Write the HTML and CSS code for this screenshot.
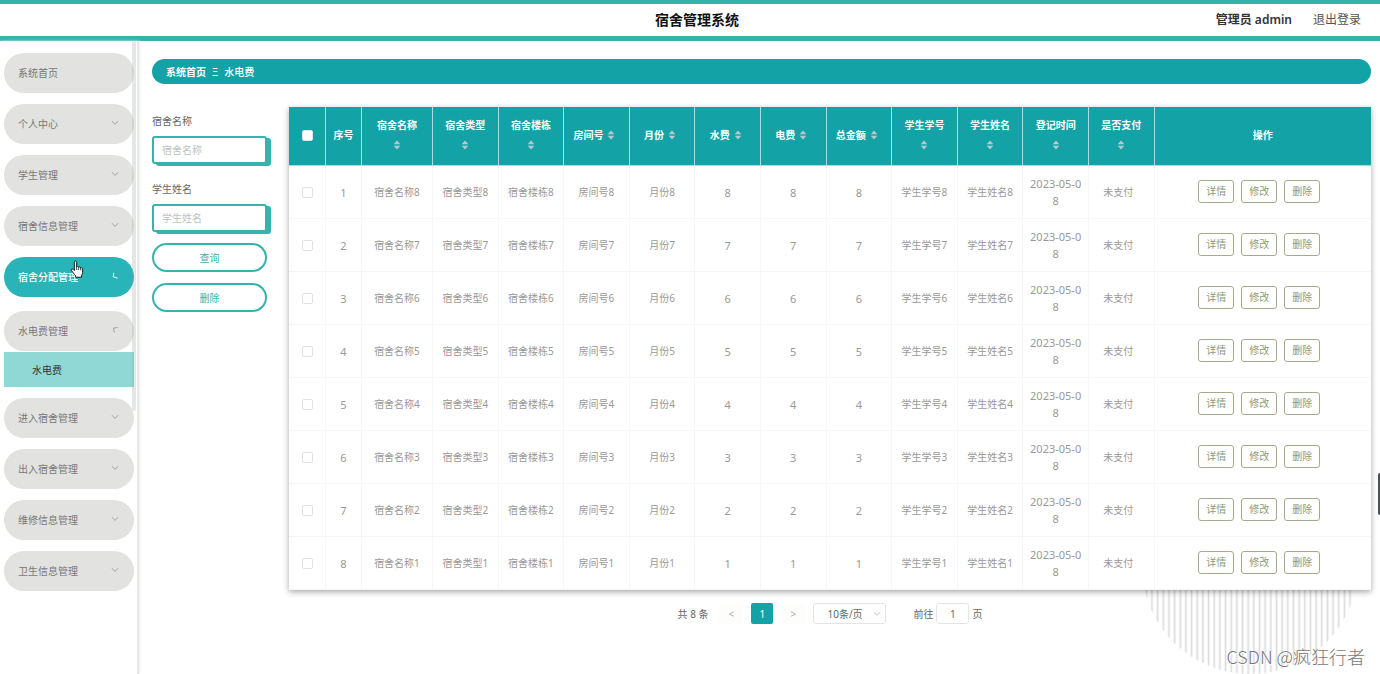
FILE: index.html
```html
<!DOCTYPE html>
<html lang="zh-CN">
<head>
<meta charset="utf-8">
<title>宿舍管理系统</title>
<link rel="stylesheet" href="styles.css">
</head>
<body>
<svg class="defs" aria-hidden="true">
  <symbol id="chevron" viewBox="0 0 8 8"><path d="M1 2.2 4 5.4 7 2.2" fill="none" stroke="currentColor" stroke-width="0.9"/></symbol>
  <symbol id="sort" viewBox="0 0 8 10"><path d="M4 .5 7.3 4.2H.7zM4 9.5.7 5.8h6.6z" fill="currentColor"/></symbol>
</svg>
<header class="topbar">
  <h1 class="topbar-title">宿舍管理系统</h1>
  <div class="topbar-user"><strong>管理员 admin</strong><a href="#logout">退出登录</a></div>
</header>
<div class="layout">
  <nav class="sidebar">
    <a class="menu-item" href="#home">系统首页</a>
    <a class="menu-item" href="#me">个人中心<svg class="chevron"><use href="#chevron"/></svg></a>
    <a class="menu-item" href="#students">学生管理<svg class="chevron"><use href="#chevron"/></svg></a>
    <a class="menu-item" href="#dorms">宿舍信息管理<svg class="chevron"><use href="#chevron"/></svg></a>
    <a class="menu-item active" href="#assign">宿舍分配管理<svg class="chevron" viewBox="0 0 8 8"><path d="M2.8.8 2.2 4.8 6.6 6.2" fill="none" stroke="currentColor"/></svg></a>
    <a class="menu-item open" href="#bills">水电费管理<svg class="chevron" viewBox="0 0 8 8"><path d="M6.6 1.4 2.4 2.2 3.4 6.6" fill="none" stroke="currentColor" stroke-width=".9"/></svg></a>
    <a class="submenu-item" href="#bill">水电费</a>
    <a class="menu-item" href="#enter">进入宿舍管理<svg class="chevron"><use href="#chevron"/></svg></a>
    <a class="menu-item" href="#access">出入宿舍管理<svg class="chevron"><use href="#chevron"/></svg></a>
    <a class="menu-item" href="#repair">维修信息管理<svg class="chevron"><use href="#chevron"/></svg></a>
    <a class="menu-item" href="#hygiene">卫生信息管理<svg class="chevron"><use href="#chevron"/></svg></a>
    <span class="scroll-thumb"></span>
    <svg class="cursor" viewBox="0 0 14 19"><path d="M4.2 11.2V2.3C4.2.5 6.6.5 6.6 2.3V7.2C7 6.3 8.6 6.5 8.7 7.6 9.2 6.9 10.7 7.2 10.8 8.3 11.5 7.8 12.9 8.2 12.9 9.5V13.3C12.9 14.8 12 15.6 11.8 16.5V18.2H5.6V16.6C4.3 15.4 2.6 13 1.2 11.1.4 9.8 1.9 9 2.9 9.9z" fill="#fff" stroke="#111"/><path d="M6.6 7.2v3.4M8.7 7.6v3M10.8 8.3v2.6" stroke="#111" stroke-width=".8"/></svg>
  </nav>
  <main class="main">
    <div class="breadcrumb"><a href="#home">系统首页</a><span>Ξ</span><span>水电费</span></div>
    <div class="content">
      <form class="search">
        <label for="dorm">宿舍名称</label>
        <input id="dorm" type="text" placeholder="宿舍名称">
        <label for="student">学生姓名</label>
        <input id="student" type="text" placeholder="学生姓名">
        <button type="button">查询</button>
        <button type="button">删除</button>
      </form>
      <section class="results">
        <table class="grid">
          <colgroup><col class="col-tick"><col class="col-index"><col class="col-name"><col span="11"><col class="col-actions"></colgroup>
          <thead><tr id="head"></tr></thead>
          <tbody id="rows"></tbody>
        </table>
        <div class="pager">
          <span class="pager-total">共 8 条</span>
          <button class="pager-arrow" type="button" aria-label="上一页">&lt;</button>
          <button class="pager-page" type="button">1</button>
          <button class="pager-arrow" type="button" aria-label="下一页">&gt;</button>
          <span class="pager-size"><select aria-label="每页条数"><option>10条/页</option></select><svg class="chevron"><use href="#chevron"/></svg></span>
          <label for="page">前往</label><input id="page" type="text" value="1"><span>页</span>
        </div>
      </section>
    </div>
    <svg class="stripes" viewBox="0 0 216 216" aria-hidden="true"><defs><pattern id="lines" width="5.66" height="10" patternUnits="userSpaceOnUse"><path d="M4.3 0V10" stroke="#dcdcdc" stroke-width="1.7"/></pattern></defs><circle cx="108" cy="108" r="108" fill="url(#lines)"/></svg>
    <span class="watermark">CSDN @疯狂行者</span>
    <span class="edge-handle"></span>
  </main>
</div>
<script src="table.js"></script>
</body>
</html>
```

FILE: styles.css
```css
* { box-sizing: border-box; }
body {
  margin: 0;
  min-height: 100vh;
  display: flex;
  flex-direction: column;
  background: #fff;
  color: #666;
  font-family: "Noto Sans", "Noto Sans CJK SC", sans-serif;
  font-size: 10px;
  line-height: 18px;
}
a { color: inherit; text-decoration: none; }
button, input, select { font: inherit; color: inherit; }
.defs { position: absolute; width: 0; height: 0; }

.topbar {
  display: grid;
  grid-template-columns: 1fr auto 1fr;
  align-items: center;
  height: 41px;
  padding: 0 19px 0 33px;
  border-top: 4px solid #37b3ae;
  border-bottom: 5px solid #37b3ae;
}
.topbar-title { grid-column: 2; margin: 0; font-size: 14px; color: #111; }
.topbar-user { display: flex; justify-content: flex-end; gap: 21px; font-size: 12px; color: #555; }
.topbar-user strong { color: #333; font-weight: 600; }

.layout { flex: 1; display: flex; }
.sidebar {
  position: relative;
  flex: none;
  width: 139px;
  padding: 12px 4px 0;
  border-right: 2px solid #e6e7e6;
  box-shadow: 1px 0 2px #eee;
}
.menu-item {
  display: flex;
  align-items: center;
  justify-content: space-between;
  width: 130px;
  height: 40px;
  margin-bottom: 11px;
  padding: 0 15px 0 14px;
  border-radius: 20px;
  background: #e2e3e1;
  color: #777;
}
.chevron { width: 8px; height: 8px; color: #999; }
.menu-item .chevron { margin-bottom: 3px; }
.menu-item.active { background: #28b4b8; color: #fff; font-weight: 500; margin-bottom: 14px; }
.menu-item.active .chevron { color: #fff; }
.menu-item.open { margin-bottom: 1px; }
.submenu-item {
  display: flex;
  align-items: center;
  width: 130px;
  height: 35px;
  margin-bottom: 11px;
  padding-left: 28px;
  background: #8fd8d5;
  color: #333;
}
.scroll-thumb {
  position: absolute;
  top: 0;
  right: 1px;
  width: 4px;
  height: 370px;
  border-radius: 0 0 2px 2px;
  background: rgba(150, 160, 155, .25);
}
.cursor { position: absolute; left: 70px; top: 219px; width: 14px; height: 18px; }

.main { position: relative; flex: 1; min-width: 0; padding: 18px 9px 0 13px; }
.breadcrumb {
  display: flex;
  align-items: center;
  gap: 6px;
  height: 25px;
  padding: 0 14px;
  border-radius: 13px;
  background: #13a3a7;
  color: #fff;
}
.breadcrumb a { font-weight: 700; }
.breadcrumb span { font-weight: 500; }
.content { display: flex; align-items: flex-start; gap: 22px; padding-top: 23px; }

.search { flex: none; display: flex; flex-direction: column; width: 115px; padding-top: 5px; }
.search label { margin-bottom: 6px; }
.search input {
  width: 100%;
  height: 28px;
  margin-bottom: 16px;
  padding: 0 8px;
  border: 2px solid #37b3ae;
  border-radius: 3px;
  background: #fff;
  box-shadow: 4px 2px 0 #37b3ae;
}
.search input + button { margin-top: -5px; }
.search ::placeholder { color: #bcc3c1; }
.search button {
  height: 29px;
  margin-bottom: 11px;
  padding: 0;
  border: 2px solid #37b3ae;
  border-radius: 15px;
  background: #fff;
  color: #37b3ae;
}

.results { position: relative; z-index: 1; flex: 1; min-width: 0; }
.grid {
  width: 100%;
  table-layout: fixed;
  border-collapse: separate;
  border-spacing: 0;
  background: #fff;
  box-shadow: 0 2px 6px rgba(0, 0, 0, .35);
}
.col-tick { width: 37px; }
.col-index { width: 36px; }
.col-name { width: 71px; }
.col-actions { width: 20%; }
.grid th, .grid td { padding: 0 6px; text-align: center; vertical-align: middle; }
.grid th {
  height: 59px;
  padding-bottom: 2px;
  background: #13a3a7;
  border-right: 1px solid #a8dcdd;
  border-bottom: 1px solid #a8dcdd;
  color: #fff;
  line-height: 20px;
}
.grid th:last-child, .grid td:last-child { border-right: 0; }
.grid td {
  height: 53px;
  border-right: 1px solid #f5f6f5;
  border-bottom: 1px solid #f5f6f5;
  color: #999;
  line-height: 17px;
}
.grid .numeric { font-size: 11px; word-break: break-all; }
.grid .status { padding-right: 12px; }
.sort { width: 8px; height: 10px; margin: 0 4px; vertical-align: -1px; color: #b7c9cd; }
.tick {
  appearance: none;
  display: block;
  width: 11px;
  height: 11px;
  margin: 0 auto;
  border: 1px solid #e0e2e0;
  border-radius: 2px;
  background: #fff;
}
.actions { display: flex; justify-content: center; }
.actions button {
  width: 36px;
  height: 23px;
  margin: 0 7px 2px 0;
  padding: 0;
  border: 1px solid #a4ab8c;
  border-radius: 3px;
  background: #fff;
  color: #8b9c7c;
}

.pager { display: flex; align-items: center; justify-content: center; padding-top: 13px; }
.pager button { height: 21px; padding: 0; border: 0; border-radius: 2px; }
.pager .pager-arrow { width: 24px; margin: 0 8px; background: #fdfdfc; color: #b0b0b0; }
.pager .pager-page { width: 22px; background: #13a3a7; color: #fff; }
.pager-total { margin-right: 3px; }
.pager-size { position: relative; margin-right: 27px; }
.pager-size select {
  appearance: none;
  display: block;
  width: 73px;
  height: 21px;
  padding: 0 13px;
  border: 1px solid #e3e5e3;
  border-radius: 3px;
  background: #fff;
}
.pager-size .chevron { position: absolute; right: 5px; top: 7px; color: #bbb; }
.pager input {
  width: 33px;
  height: 21px;
  margin: 0 3px;
  padding: 0;
  border: 1px solid #e3e5e3;
  border-radius: 3px;
  background: #fff;
  text-align: center;
}

.stripes { position: absolute; right: 22px; bottom: 0; width: 216px; height: 216px; }
.watermark {
  position: absolute;
  right: 15px;
  bottom: 6px;
  z-index: 2;
  font-family: "Noto Sans CJK SC", sans-serif;
  font-size: 18px;
  font-weight: 300;
  line-height: 24px;
  color: #777;
  text-shadow: 1px 1px 0 #fff;
}
.edge-handle {
  position: absolute;
  right: 0;
  top: 432px;
  width: 2px;
  height: 42px;
  border-radius: 2px 0 0 2px;
  background: #4b5254;
}
```

FILE: table.js
```js
const columns = ["宿舍名称", "宿舍类型", "宿舍楼栋", "房间号", "月份", "水费", "电费", "总金额", "学生学号", "学生姓名", "登记时间", "是否支付"];
const sortIcon = '<svg class="sort"><use href="#sort"/></svg>';
const tick = (label) => `<input class="tick" type="checkbox" aria-label="${label}">`;

document.getElementById("head").innerHTML =
  `<th>${tick("全选")}</th><th>序号</th>` +
  columns.map((name) => `<th>${name}${name.length > 3 ? "<br>" : ""}${sortIcon}</th>`).join("") +
  "<th>操作</th>";

const cell = (name, n) => {
  if (["水费", "电费", "总金额"].includes(name)) return `<td class="numeric">${n}</td>`;
  if (name === "登记时间") return '<td class="numeric">2023-05-08</td>';
  if (name === "是否支付") return '<td class="status">未支付</td>';
  return `<td>${name}${n}</td>`;
};

document.getElementById("rows").innerHTML = [8, 7, 6, 5, 4, 3, 2, 1].map((n, i) =>
  `<tr><td>${tick("选择第" + (i + 1) + "行")}</td><td class="numeric">${i + 1}</td>` +
  columns.map((name) => cell(name, n)).join("") +
  '<td><div class="actions"><button type="button">详情</button><button type="button">修改</button><button type="button">删除</button></div></td></tr>'
).join("");
```
